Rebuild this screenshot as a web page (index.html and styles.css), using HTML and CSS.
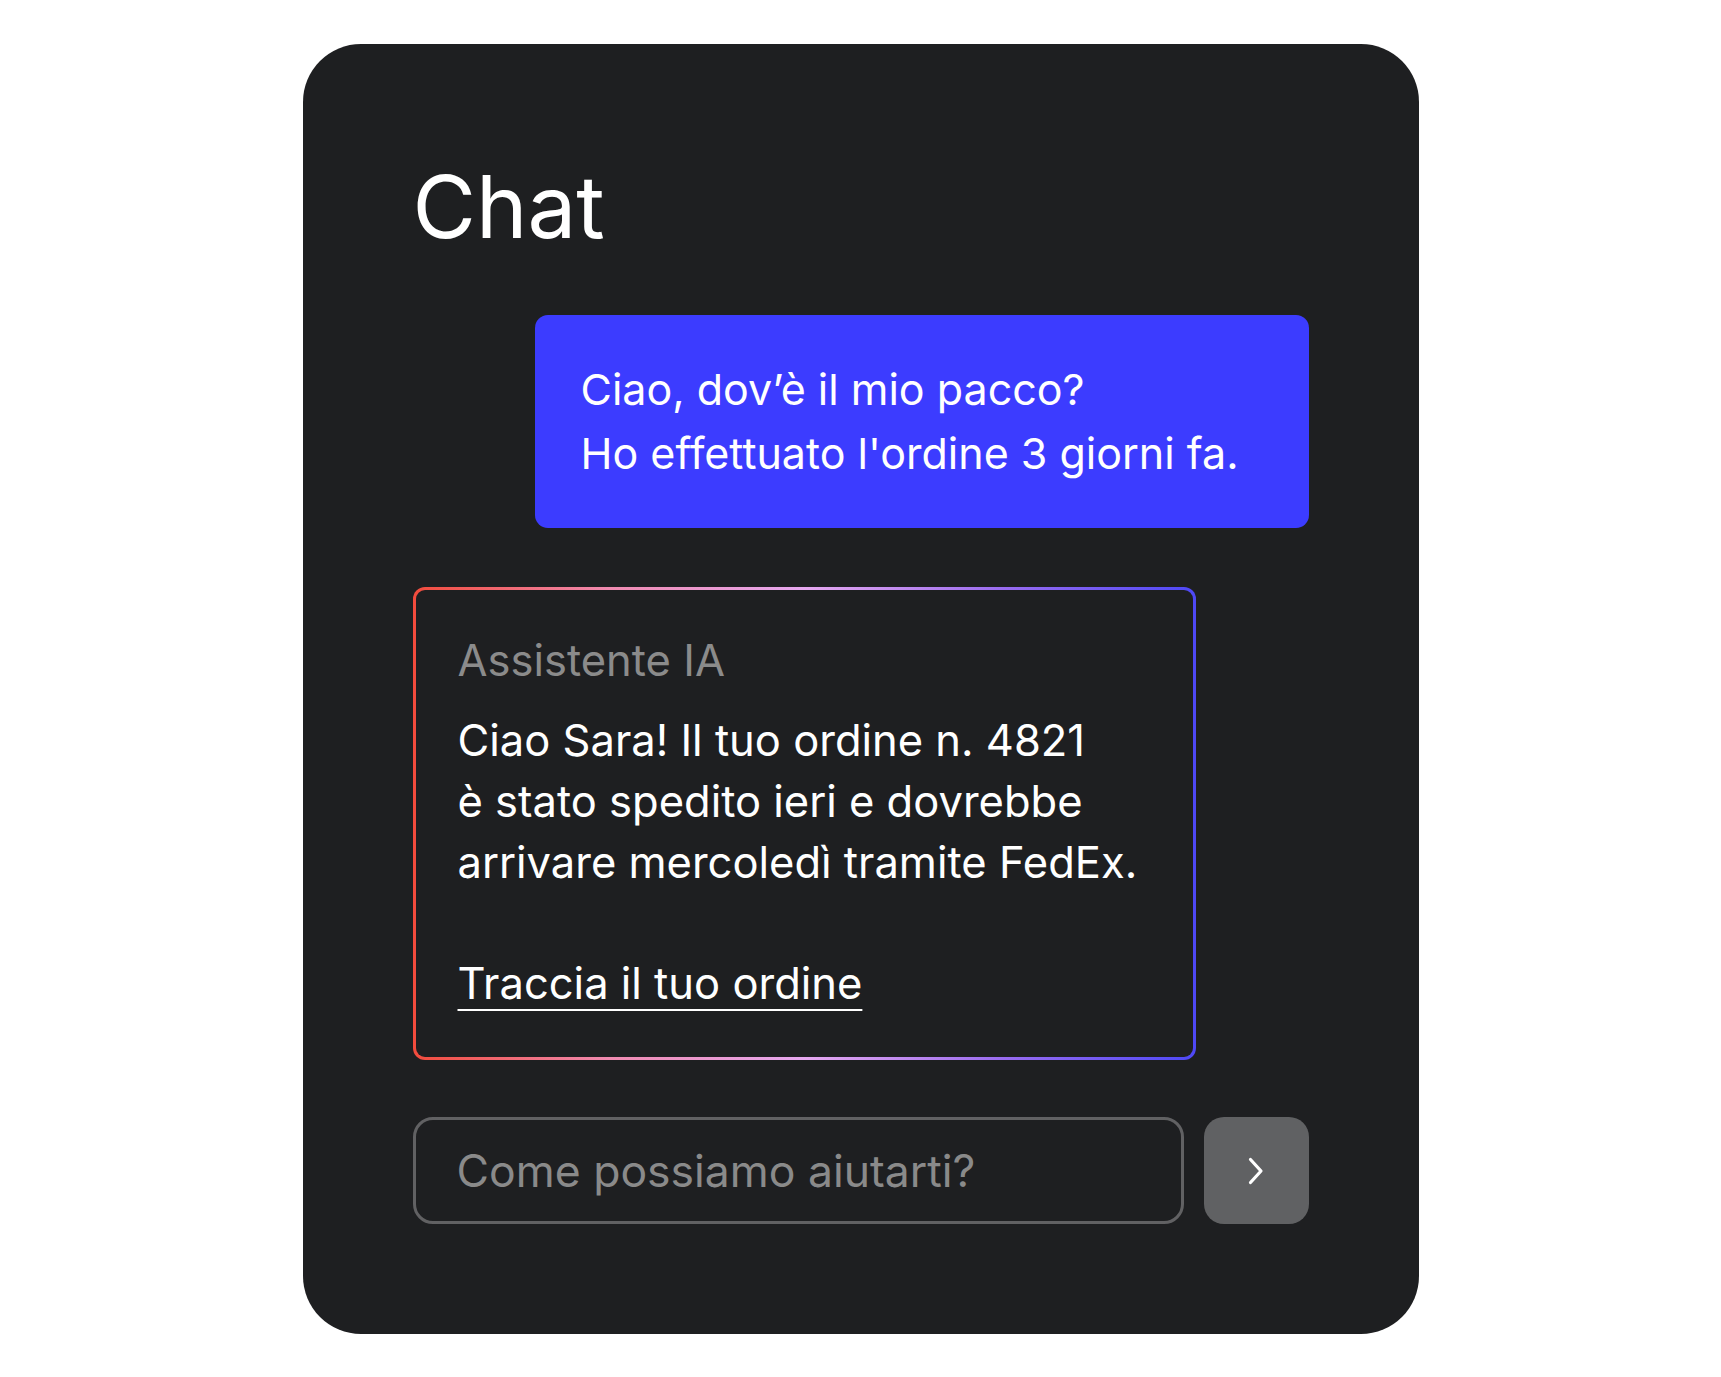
FILE: index.html
```html
<html>
<head>
    <title>Chat</title>
    <link rel="stylesheet" href="styles.css">
</head>
<body>
    <div class="chat-card">
        <h1>Chat</h1>

        <div class="msg-user">
            Ciao, dov’è il mio pacco?<br>
            Ho effettuato l'ordine 3 giorni fa.
        </div>

        <div class="msg-ai">
            <div class="msg-ai-label">Assistente IA</div>
            <p class="msg-ai-text">Ciao Sara! Il tuo ordine n. 4821<br>
            è stato spedito ieri e dovrebbe<br>
            arrivare mercoledì tramite FedEx.</p>
            <a class="msg-ai-link" href="#">Traccia il tuo ordine</a>
        </div>

        <form class="chat-form">
            <input type="text" class="chat-input" placeholder="Come possiamo aiutarti?">
            <button type="submit" class="chat-send">
                <svg width="18" height="28" viewBox="0 0 18 28">
                    <path d="M3.5 2.5 L14 14 L3.5 25.5" fill="none" stroke="#ffffff" stroke-width="3.2" stroke-linecap="round" stroke-linejoin="round"/>
                </svg>
            </button>
        </form>
    </div>
</body>
</html>
```

FILE: styles.css
```css
body {
    margin: 0;
    background-color: #ffffff;
    font-family: Inter, "Noto Sans", sans-serif;
}

.chat-card {
    box-sizing: border-box;
    width: 1116px;
    margin: 44px auto 43px auto;
    padding: 111px 110px 110px 110px;
    background-color: #1e1f21;
    border-radius: 58px;
    display: flex;
    flex-direction: column;
    gap: 59px;
    color: #ffffff;
}

h1 {
    margin: 0 0 -2px 0;
    font-size: 87px;
    font-weight: 400;
    line-height: 103px;
}

.msg-user {
    align-self: flex-end;
    box-sizing: border-box;
    width: 774px;
    padding: 42px 40px 43px 46px;
    background-color: #3c3cff;
    border-radius: 13px;
    font-size: 43px;
    line-height: 64px;
}

.msg-ai {
    box-sizing: border-box;
    width: 783px;
    padding: 40px 40px 43px 42px;
    border: 3px solid transparent;
    border-radius: 12px;
    background:
        linear-gradient(#1e1f21, #1e1f21) padding-box,
        linear-gradient(90deg, #f24b3c 0%, #f08ab0 25%, #e6a8f0 50%, #9a6cf0 75%, #4e48f6 100%) border-box;
    font-size: 43.5px;
    line-height: 61px;
}

.msg-ai-label {
    color: #8b8b8b;
    margin-bottom: 19px;
}

.msg-ai-text {
    margin: 0 0 60px 0;
}

.msg-ai-link {
    display: inline-block;
    color: #ffffff;
    text-decoration: underline;
    text-decoration-thickness: 2px;
    text-underline-offset: 10px;
}

.chat-form {
    display: flex;
    gap: 20px;
    margin: -2px 0 0 0;
}

.chat-input {
    flex: 1;
    min-width: 0;
    box-sizing: border-box;
    height: 107px;
    padding: 0 40px 0 41px;
    background: transparent;
    border: 3px solid #616163;
    border-radius: 20px;
    color: #ffffff;
    font-family: Inter, "Noto Sans", sans-serif;
    font-size: 44.5px;
    outline: none;
}

.chat-input::placeholder {
    color: #8a8a8a;
}

.chat-send {
    flex-shrink: 0;
    width: 105px;
    height: 107px;
    border: none;
    border-radius: 20px;
    background-color: #606163;
    display: flex;
    align-items: center;
    justify-content: center;
    padding: 0;
    cursor: pointer;
}
```
